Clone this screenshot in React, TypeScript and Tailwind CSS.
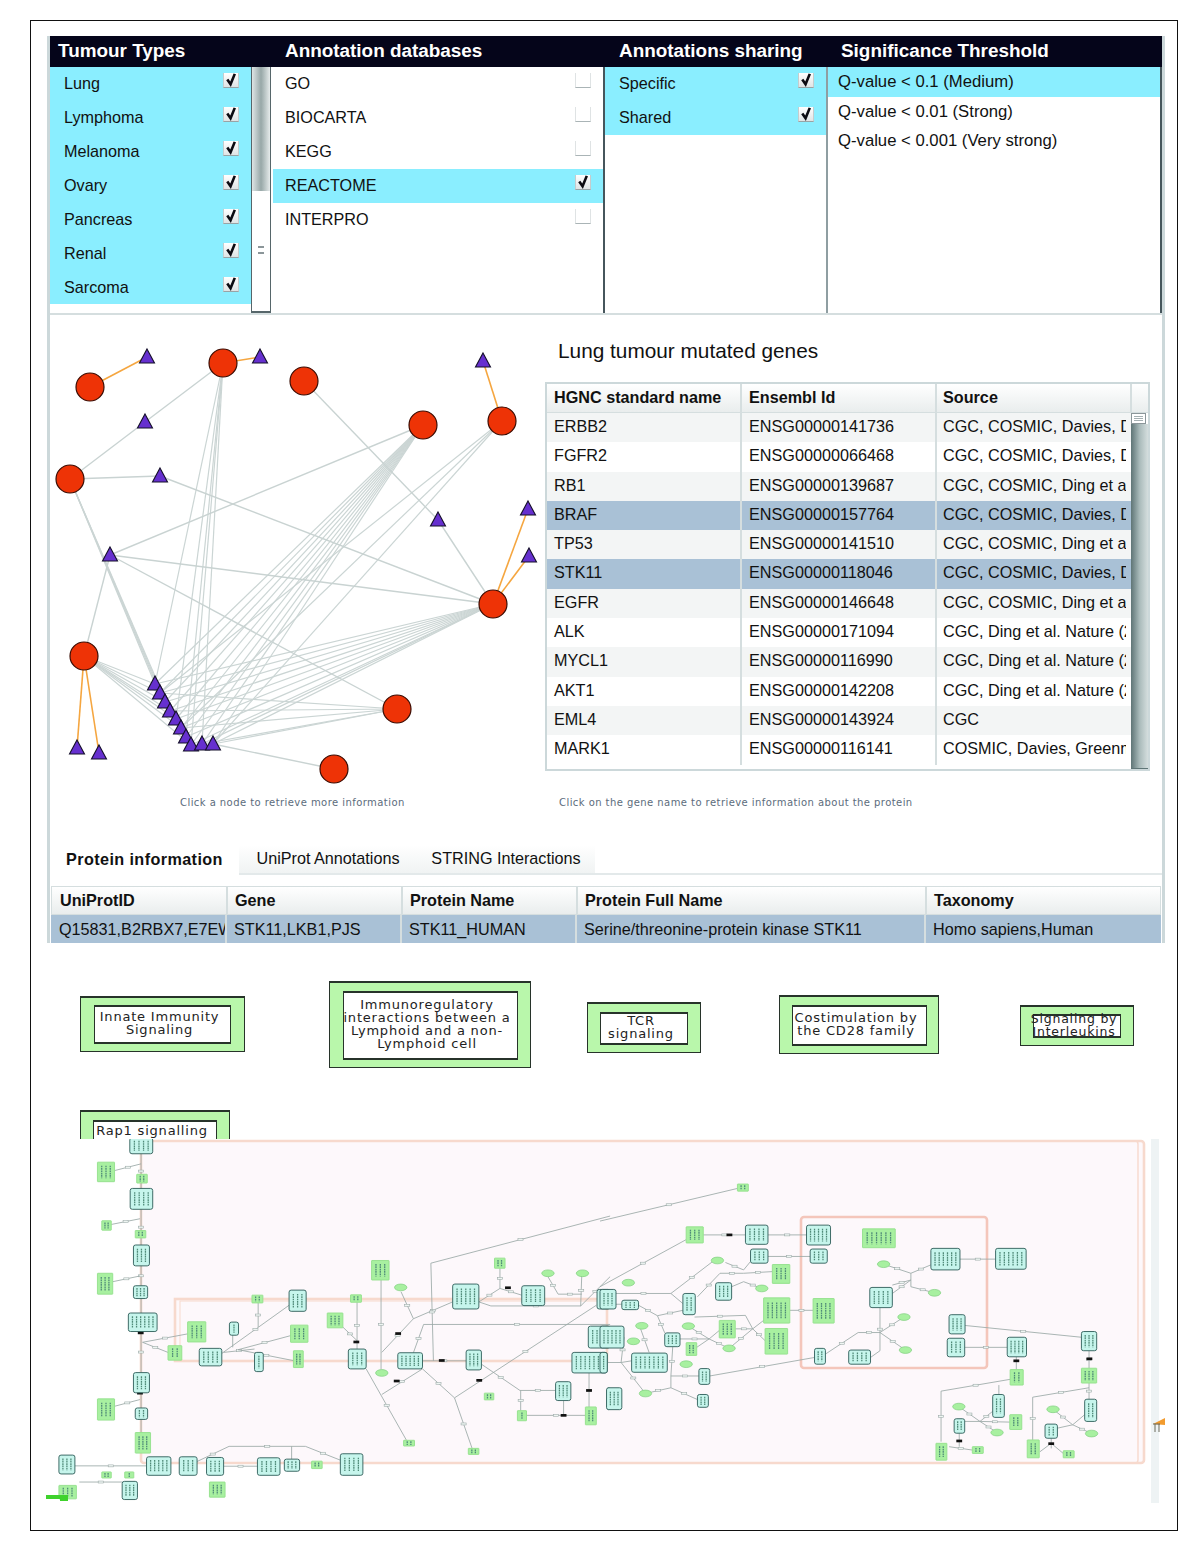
import { Fragment } from "react";

const tumours = ["Lung", "Lymphoma", "Melanoma", "Ovary", "Pancreas", "Renal", "Sarcoma"];
const databases = ["GO", "BIOCARTA", "KEGG", "REACTOME", "INTERPRO"];
const thresholds = ["Q-value < 0.1 (Medium)", "Q-value < 0.01 (Strong)", "Q-value < 0.001 (Very strong)"];

const genes = [
  ["ERBB2", "ENSG00000141736", "CGC, COSMIC, Davies, Ding et al. Nature"],
  ["FGFR2", "ENSG00000066468", "CGC, COSMIC, Davies, Ding et al. Nature"],
  ["RB1", "ENSG00000139687", "CGC, COSMIC, Ding et al. Nature (2008)"],
  ["BRAF", "ENSG00000157764", "CGC, COSMIC, Davies, Ding et al. Nature"],
  ["TP53", "ENSG00000141510", "CGC, COSMIC, Ding et al. Nature (2008)"],
  ["STK11", "ENSG00000118046", "CGC, COSMIC, Davies, Ding et al. Nature"],
  ["EGFR", "ENSG00000146648", "CGC, COSMIC, Ding et al. Nature (2008)"],
  ["ALK", "ENSG00000171094", "CGC, Ding et al. Nature (2008)"],
  ["MYCL1", "ENSG00000116990", "CGC, Ding et al. Nature (2008)"],
  ["AKT1", "ENSG00000142208", "CGC, Ding et al. Nature (2008)"],
  ["EML4", "ENSG00000143924", "CGC"],
  ["MARK1", "ENSG00000116141", "COSMIC, Davies, Greenman et al."],
];
const selectedGenes = ["BRAF", "STK11"];

// network graph, page coordinates
const reds = [
  [90, 387], [223, 363], [304, 381], [423, 425], [502, 421],
  [70, 479], [493, 604], [84, 656], [397, 709], [334, 769],
];
const triangles = [
  [147, 357], [260, 357], [483, 361], [145, 422], [160, 476], [438, 520],
  [528, 509], [529, 556], [110, 555], [77, 748], [99, 753],
];
const cluster = [
  [155, 684], [160, 693], [165, 702], [170, 711], [176, 719],
  [181, 728], [186, 737], [191, 745], [202, 744], [213, 744],
];
const orangeEdges = [
  [90, 387, 147, 357], [223, 363, 260, 357], [483, 361, 502, 421], [493, 604, 528, 509],
  [493, 604, 529, 556], [84, 656, 77, 748], [84, 656, 99, 753],
];
const greyEdges = [
  [223, 363, 145, 422], [145, 422, 70, 479], [70, 479, 160, 476], [160, 476, 493, 604],
  [304, 381, 438, 520], [438, 520, 493, 604], [423, 425, 110, 555], [110, 555, 493, 604],
  [110, 555, 397, 709], [110, 555, 84, 656], [213, 744, 334, 769],
];
// each hub links to some nodes of the cluster
const hubs: { at: number[]; to: number[] }[] = [
  { at: [423, 425], to: [0, 1, 2, 3, 4, 5, 6, 7, 8, 9] },
  { at: [493, 604], to: [0, 1, 2, 3, 4, 5, 6, 7, 8, 9] },
  { at: [84, 656], to: [0, 1, 2, 3, 4, 5, 7] },
  { at: [70, 479], to: [0, 1, 2, 3] },
  { at: [223, 363], to: [0, 4, 6, 7, 8] },
  { at: [502, 421], to: [1, 5, 9] },
  { at: [397, 709], to: [1, 3, 5, 8, 9] },
];

const Tri = ({ x, y }: { x: number; y: number }) => (
  <polygon points={`${x},${y - 8} ${x + 7.5},${y + 6} ${x - 7.5},${y + 6}`} fill="#6630cf" stroke="#15102a" strokeWidth="1.1" />
);

// pathway diagram, drawn in two halves
const teal: number[][] = [
  [247, 28, 310, 75], [248, 178, 310, 240], [257, 346, 301, 408], [257, 467, 296, 505], [243, 548, 322, 603],
  [257, 725, 301, 785], [262, 830, 296, 864], [52, 970, 96, 1026], [293, 975, 360, 1030], [383, 975, 432, 1030],
  [458, 977, 505, 1030], [598, 978, 660, 1030], [672, 982, 714, 1018], [826, 966, 888, 1030], [226, 1048, 268, 1102],
  [685, 480, 732, 543], [521, 575, 546, 614], [438, 653, 500, 705], [590, 665, 614, 722], [848, 655, 897, 714],
  [984, 666, 1052, 714], [1172, 658, 1214, 717], [1135, 462, 1207, 536], [1325, 467, 1388, 526], [1532, 478, 1568, 536],
  [1508, 587, 1568, 652], [1463, 665, 1560, 726], [1418, 752, 1460, 808], [1560, 770, 1568, 835],
];
const green: number[][] = [
  [158, 100, 205, 158], [266, 136, 295, 162], [170, 274, 196, 302], [262, 303, 291, 325], [158, 430, 200, 492],
  [158, 803, 205, 866], [262, 903, 304, 964], [406, 574, 456, 634], [352, 645, 390, 688], [583, 495, 613, 518],
  [689, 584, 737, 635], [697, 660, 724, 710], [790, 548, 833, 592], [854, 494, 884, 516], [912, 392, 960, 450],
  [1250, 385, 1279, 415], [1222, 786, 1248, 806], [1313, 838, 1338, 868], [1500, 827, 1530, 880], [1000, 926, 1030, 943],
  [1178, 950, 1207, 968], [747, 988, 776, 1010], [466, 1050, 509, 1095], [170, 1020, 196, 1038], [233, 1020, 258, 1038],
  [52, 1060, 100, 1100],
];
const ovals = [[992, 472], [1397, 430], [1492, 430], [940, 726]];
const edges: number[][] = [
  [278, 75, 278, 178], [278, 240, 278, 346], [278, 408, 278, 467], [278, 505, 278, 548], [278, 603, 278, 725],
  [278, 785, 278, 830], [278, 864, 278, 905], [205, 125, 278, 105], [196, 285, 275, 268], [200, 455, 275, 438],
  [205, 825, 275, 805], [282, 635, 406, 610], [282, 635, 352, 665], [96, 1002, 293, 1002], [108, 1050, 226, 1050],
  [430, 990, 520, 944], [520, 944, 730, 944], [730, 944, 826, 985], [505, 1003, 598, 1003], [692, 944, 692, 982],
  [500, 668, 685, 525], [530, 614, 530, 650], [600, 518, 600, 590], [505, 665, 590, 655], [545, 657, 690, 615],
  [545, 657, 700, 690], [872, 516, 872, 655], [833, 590, 872, 630], [938, 450, 938, 715], [993, 485, 1027, 565],
  [940, 665, 1027, 565], [1027, 565, 1135, 515], [1075, 400, 1568, 260], [1075, 400, 1082, 690], [1052, 690, 1172, 690],
  [1027, 666, 1055, 582], [1055, 582, 1568, 582], [897, 714, 1010, 930], [940, 790, 1052, 714], [1052, 714, 1140, 800],
  [1140, 800, 1190, 955], [1140, 800, 1530, 525], [1214, 700, 1320, 778], [1320, 778, 1418, 778], [1322, 778, 1322, 838],
  [1338, 852, 1500, 852], [1207, 515, 1265, 475], [1265, 415, 1265, 475], [1265, 475, 1325, 495], [1207, 515, 1240, 527],
  [1240, 527, 1487, 527], [1487, 527, 1568, 440], [1397, 440, 1425, 492], [1425, 492, 1490, 492], [1490, 435, 1487, 527],
  [1440, 808, 1440, 852], [1510, 726, 1510, 830],
];
const teal2: number[][] = [
  [400, 287, 462, 344], [568, 287, 634, 346], [414, 358, 462, 400], [578, 358, 625, 400], [318, 458, 362, 510],
  [0, 478, 44, 536], [60, 510, 106, 538], [228, 490, 262, 553], [0, 587, 66, 652], [178, 607, 220, 648],
  [0, 665, 20, 726], [87, 667, 185, 724], [18, 770, 60, 835], [272, 713, 302, 760], [268, 790, 298, 828],
  [910, 356, 990, 420], [1088, 356, 1172, 418], [742, 472, 804, 532], [590, 653, 620, 700], [684, 658, 744, 700],
  [960, 553, 1004, 610], [955, 623, 1003, 678], [1120, 620, 1173, 678], [1324, 603, 1366, 660], [1080, 790, 1112, 858],
  [974, 862, 1003, 905], [1333, 804, 1366, 870], [1224, 878, 1258, 920],
];
const green2: number[][] = [
  [378, 165, 408, 186], [237, 292, 284, 340], [474, 404, 522, 460], [450, 503, 522, 578], [586, 505, 644, 578],
  [454, 594, 516, 670], [328, 570, 372, 622], [237, 636, 266, 674], [722, 298, 812, 354], [1127, 850, 1160, 894],
  [1128, 716, 1164, 762], [1324, 712, 1366, 756], [924, 935, 954, 985], [1024, 945, 1054, 965], [1175, 925, 1208, 978],
  [1274, 957, 1304, 978],
];
const ovals2 = [
  [78, 458], [323, 392], [445, 475], [115, 586], [243, 587], [355, 653], [237, 700], [92, 632], [125, 787],
  [780, 403], [920, 488], [836, 560], [840, 658], [987, 826], [1092, 903], [1246, 834], [1352, 906],
];
const edges2: number[][] = [
  [0, 275, 378, 178], [284, 316, 400, 316], [462, 316, 568, 316], [462, 380, 578, 380], [0, 470, 237, 330],
  [44, 490, 195, 490], [195, 490, 228, 520], [195, 490, 310, 395], [60, 522, 30, 522], [106, 525, 158, 556],
  [158, 556, 228, 540], [158, 556, 178, 607], [268, 500, 330, 430], [330, 430, 395, 430], [362, 470, 395, 455],
  [395, 420, 414, 395], [395, 430, 474, 425], [395, 455, 445, 475], [345, 398, 395, 420], [200, 648, 195, 735],
  [195, 735, 272, 735], [195, 770, 195, 735], [195, 770, 268, 805], [125, 787, 195, 770], [302, 735, 590, 680],
  [220, 625, 300, 625], [266, 650, 300, 625], [243, 587, 300, 625], [300, 625, 355, 653], [300, 625, 328, 600],
  [372, 595, 420, 595], [420, 595, 450, 570], [420, 595, 454, 630], [355, 653, 420, 595], [260, 560, 400, 555],
  [400, 555, 420, 595], [522, 540, 586, 540], [66, 620, 58, 695], [20, 695, 58, 695], [58, 695, 87, 690],
  [58, 695, 125, 787], [110, 590, 135, 665], [620, 670, 710, 606], [710, 606, 770, 606], [770, 532, 770, 660],
  [770, 606, 840, 658], [770, 660, 744, 680], [770, 606, 836, 560], [804, 490, 855, 450], [804, 465, 855, 450],
  [855, 430, 910, 405], [855, 430, 780, 403], [855, 470, 855, 430], [855, 470, 920, 488], [990, 388, 1088, 388],
  [1004, 585, 1324, 620], [1003, 650, 1120, 650], [1145, 678, 1145, 716], [1345, 660, 1345, 712], [938, 930, 938, 780],
  [938, 780, 1128, 745], [1097, 762, 1097, 790], [1190, 925, 1190, 798], [1190, 798, 1345, 770], [1345, 756, 1345, 804],
  [1045, 870, 1080, 840], [1003, 870, 1045, 870], [1045, 870, 987, 826], [1045, 870, 1092, 903], [1045, 870, 1127, 872],
  [988, 905, 988, 945], [960, 945, 1024, 955], [1300, 880, 1333, 850], [1258, 890, 1300, 880], [1300, 880, 1246, 834],
  [1300, 880, 1352, 906], [1241, 920, 1241, 950], [1210, 960, 1241, 935], [1241, 935, 1274, 965],
];
const markers: number[][] = [
  [985, 609], [870, 634], [981, 750], [1105, 689], [1208, 748], [1287, 473], [1440, 852], [1510, 778],
  [277, 607], [275, 786],
];
const markers2: number[][] = [
  [356, 316], [1145, 690], [1346, 684], [988, 928], [1241, 936],
];

const NodeBox = ({ box, fill, stroke, rx }: { box: number[]; fill: string; stroke: string; rx: number }) => {
  const [x1, y1, x2, y2] = box;
  const w = x2 - x1;
  const h = y2 - y1;
  const cols = Math.max(1, Math.floor(w / 13));
  return (
    <g>
      <rect x={x1} y={y1} width={w} height={h} rx={rx} fill={fill} stroke={stroke} strokeWidth="2.6" />
      {Array.from({ length: cols }).map((_, i) => {
        const cx = x1 + ((i + 1) * w) / (cols + 1);
        return (
          <line key={i} x1={cx} y1={y1 + h * 0.18} x2={cx} y2={y2 - h * 0.18} stroke="#4f8a78" strokeWidth="3.5" strokeDasharray="5 2" />
        );
      })}
    </g>
  );
};

const Edges = ({ list }: { list: number[][] }) => (
  <>
    {list.map(([x1, y1, x2, y2], i) => (
      <Fragment key={i}>
        <line x1={x1} y1={y1} x2={x2} y2={y2} stroke="#9aa8a6" strokeWidth="2.4" />
        {Math.hypot(x2 - x1, y2 - y1) > 45 && (
          <rect x={(x1 + x2) / 2 - 7} y={(y1 + y2) / 2 - 3} width="14" height="6" fill="#eef5f2" stroke="#9aa8a6" strokeWidth="1.6" />
        )}
      </Fragment>
    ))}
  </>
);

const Half = ({ x, e, t, g, o, m }: { x: number; e: number[][]; t: number[][]; g: number[][]; o: number[][]; m: number[][] }) => (
  <g transform={`translate(${x} 1128.5) scale(0.3636 0.3367)`}>
    <Edges list={e} />
    {m.map(([mx, my], i) => (
      <rect key={i} x={mx - 8} y={my - 4} width="16" height="8" fill="#111" />
    ))}
    {g.map((b, i) => (
      <NodeBox key={i} box={b} fill="#a8f0a0" stroke="#93e08c" rx={1} />
    ))}
    {t.map((b, i) => (
      <NodeBox key={i} box={b} fill="#c6f5ec" stroke="#2f5f5a" rx={6} />
    ))}
    {o.map(([cx, cy], i) => (
      <ellipse key={i} cx={cx} cy={cy} rx="17" ry="10" fill="#a8f0a0" stroke="#7fcf80" strokeWidth="2" />
    ))}
  </g>
);

const Check = ({ on }: { on: boolean }) => (
  <div
    className={`relative mt-[-6px] h-[15px] w-[16px] border-x border-b ${
      on ? "border-[#c5cccd] border-b-[#98a4a6] bg-gradient-to-b from-white to-[#dfe4e5]" : "border-[#dfe3e4] border-b-[#aab4b6] bg-white"
    }`}
  >
    {on && (
      <svg viewBox="0 0 16 15" className="absolute left-0 top-[-1px] h-[15px] w-[15px]">
        <path d="M3.5 7.5 L7 12.5 L11.5 1.5" fill="none" stroke="#0b0b12" strokeWidth="2.8" />
      </svg>
    )}
  </div>
);

const CheckRow = ({ label, on, pad }: { label: string; on: boolean; pad: string }) => (
  <div className={`flex h-[33.9px] items-center justify-between ${pad} pr-[12px] ${on ? "bg-[#8aeeff]" : ""}`}>
    <span className="mt-[-1px]">{label}</span>
    <Check on={on} />
  </div>
);

const PathwayBox = ({ lines, outer, inner, size }: { lines: string[]; outer: string; inner: string; size?: string }) => (
  <div className={`flex shrink-0 items-center justify-center border border-[#27332a] border-t-2 bg-[#b9f7ab] ${outer}`}>
    <div className={`flex flex-col items-center justify-center border border-[#27332a] border-y-2 bg-white pb-[3px] pr-[6px] leading-[13px] tracking-[0.8px] text-[#222] ${inner} ${size ?? "text-[13px]"}`}>
      {lines.map((l) => (
        <span key={l} className="whitespace-nowrap">{l}</span>
      ))}
    </div>
  </div>
);

export default function App() {
  return (
    <div className="h-[1557px] w-[1200px] bg-white pl-[30px] pt-[20px] font-['Liberation_Sans',Arial,sans-serif] text-[#111]">
      <div className="h-[1511px] w-[1148px] overflow-hidden border border-[#111] pt-[15px]">
        <div className="ml-[16px] w-[1118px] border-x-[3px] border-[#ccd8da]">
          {/* Filter panel */}
          <div className="grid h-[31px] grid-cols-[227px_334px_222px_1fr] items-center bg-[#05051a] pl-[8px] text-[18.9px] font-bold text-white">
            <span>Tumour Types</span>
            <span>Annotation databases</span>
            <span>Annotations sharing</span>
            <span>Significance Threshold</span>
          </div>
          <div className="flex h-[248px] border-b-2 border-[#d5dedf] text-[16.2px]">
            <div className="flex w-[222px]">
              <div className="w-[201px]">
                {tumours.map((t) => (
                  <CheckRow key={t} label={t} on pad="pl-[14px]" />
                ))}
              </div>
              <div className="flex w-[20px] flex-col border-x border-b-2 border-[#56666a]">
                <div className="h-[124px] bg-gradient-to-r from-[#dfe5e5] via-[#98a8a8] to-[#e6ebeb]" />
                <div className="flex flex-1 items-center justify-center bg-white">
                  <div className="mt-[-2px] h-[8px] w-[6px] border-y-2 border-double border-[#8b9699]" />
                </div>
              </div>
            </div>
            <div className="w-[333px] border-r-2 border-[#46565c] pl-[1px]">
              {databases.map((d) => (
                <CheckRow key={d} label={d} on={d === "REACTOME"} pad="pl-[12px]" />
              ))}
            </div>
            <div className="w-[223px] border-r-2 border-[#8f9ea2]">
              <CheckRow label="Specific" on pad="pl-[14px]" />
              <CheckRow label="Shared" on pad="pl-[14px]" />
            </div>
            <div className="flex-1 border-r-2 border-[#46565c] text-[16.7px]">
              {thresholds.map((t, i) => (
                <div key={t} className={`flex h-[29.5px] items-center pl-[10px] ${i === 0 ? "bg-[#8aeeff]" : ""}`}>
                  {t}
                </div>
              ))}
            </div>
          </div>

          {/* Network and gene table */}
          <div className="flex h-[529px]">
            <div className="w-[490px]">
              <svg viewBox="50 330 490 460" className="mt-[15px] block h-[460px] w-[490px] blur-[0.3px]">
                {hubs.map(({ at, to }, h) =>
                  to.map((i) => (
                    <line key={`${h}-${i}`} x1={at[0]} y1={at[1]} x2={cluster[i][0]} y2={cluster[i][1]} stroke="#cbd5d4" strokeWidth="1.2" />
                  ))
                )}
                {greyEdges.map(([a, b, c, d], i) => (
                  <line key={i} x1={a} y1={b} x2={c} y2={d} stroke="#c9d3d2" strokeWidth="1.4" />
                ))}
                {orangeEdges.map(([a, b, c, d], i) => (
                  <line key={i} x1={a} y1={b} x2={c} y2={d} stroke="#f5a640" strokeWidth="1.6" />
                ))}
                {triangles.concat(cluster).map(([x, y], i) => (
                  <Tri key={i} x={x} y={y} />
                ))}
                {reds.map(([x, y], i) => (
                  <circle key={i} cx={x} cy={y} r="14" fill="#ee3306" stroke="#3a0d04" strokeWidth="1.2" />
                ))}
              </svg>
              <p className="mt-[6px] pl-[130px] font-['DejaVu_Sans',sans-serif] text-[10px] leading-[13px] tracking-[0.44px] text-[#5c6c7c]">
                Click a node to retrieve more information
              </p>
            </div>
            <div className="w-[620px] pl-[5px]">
              <h2 className="pl-[13px] pt-[24px] text-[20.8px] leading-[24px]">Lung tumour mutated genes</h2>
              <div className="mt-[19px] h-[389px] w-[605px] border-2 border-[#ccd8da] text-[16.2px]">
                <div className="flex h-[29px] border-b border-[#d5dedf] bg-gradient-to-b from-white to-[#e9eded] font-bold">
                  <div className="w-[195px] border-r-2 border-[#d5dedf] pl-[7px] leading-[27px]">HGNC standard name</div>
                  <div className="w-[195px] border-r-2 border-[#d5dedf] pl-[7px] leading-[27px]">Ensembl Id</div>
                  <div className="w-[195px] border-r-2 border-[#d5dedf] pl-[6px] leading-[27px]">Source</div>
                </div>
                <div className="flex">
                  <div className="w-[584px]">
                    {genes.map((g, i) => (
                      <div
                        key={g[0]}
                        className={`flex h-[29.3px] items-center ${selectedGenes.includes(g[0]) ? "bg-[#a9c1d6]" : i % 2 === 0 ? "bg-[#f3f5f5]" : "bg-white"}`}
                      >
                        <div className="h-full w-[195px] border-r-2 border-[#d5dedf] pl-[7px] leading-[27.5px]">{g[0]}</div>
                        <div className="h-full w-[195px] border-r-2 border-[#d5dedf] pl-[7px] leading-[27.5px]">{g[1]}</div>
                        <div className="h-full w-[189px] overflow-hidden whitespace-nowrap pl-[6px] leading-[27.5px]">{g[2]}</div>
                      </div>
                    ))}
                  </div>
                  <div className="flex h-[356px] w-[17px] flex-col border-b border-[#5f7576]">
                    <div className="flex h-[11px] w-[15px] flex-col justify-center gap-[1px] border border-[#8b9699] bg-white px-[2px]">
                      <div className="h-px bg-[#a5b0b2]" />
                      <div className="h-px bg-[#a5b0b2]" />
                      <div className="h-px bg-[#a5b0b2]" />
                    </div>
                    <div className="flex-1 bg-gradient-to-r from-[#5f7576] via-[#a9baba] to-[#d5dede]" />
                  </div>
                </div>
              </div>
              <p className="mt-[25px] pl-[14px] font-['DejaVu_Sans',sans-serif] text-[10px] leading-[13px] tracking-[0.44px] text-[#5c6c7c]">
                Click on the gene name to retrieve information about the protein
              </p>
            </div>
          </div>

          {/* Protein tabs */}
          <div className="mt-[1px] flex h-[30px] items-center text-[16.2px]">
            <div className="mt-[-2px] w-[189px] pl-[16px] font-bold tracking-[0.4px]">Protein information</div>
            <div className="flex h-full w-[178px] items-center justify-center border-b-2 border-[#e3e9ea] bg-gradient-to-b from-white to-[#f0f3f3] pb-[2px]">UniProt Annotations</div>
            <div className="flex h-full w-[178px] items-center justify-center border-b-2 border-[#e3e9ea] bg-gradient-to-b from-white to-[#f0f3f3] pb-[2px]">STRING Interactions</div>
            <div className="h-full flex-1 border-b-2 border-[#e3e9ea]" />
          </div>
          <div className="mx-[1px] mt-[11px] text-[16.2px]">
            <div className="flex h-[29px] items-center border border-[#d5dedf] bg-gradient-to-b from-white to-[#e9eded] font-bold">
              <div className="h-full w-[176px] border-r-2 border-[#d5dedf] pl-[8px] leading-[27px]">UniProtID</div>
              <div className="h-full w-[175px] border-r-2 border-[#d5dedf] pl-[7px] leading-[27px]">Gene</div>
              <div className="h-full w-[175px] border-r-2 border-[#d5dedf] pl-[7px] leading-[27px]">Protein Name</div>
              <div className="h-full w-[349px] border-r-2 border-[#d5dedf] pl-[7px] leading-[27px]">Protein Full Name</div>
              <div className="h-full flex-1 pl-[7px] leading-[27px]">Taxonomy</div>
            </div>
            <div className="flex h-[28px] items-center bg-[#a9c1d6]">
              <div className="h-full w-[176px] overflow-hidden whitespace-nowrap border-r-2 border-[#d5dedf] pl-[8px] leading-[28px]">Q15831,B2RBX7,E7EW</div>
              <div className="h-full w-[175px] border-r-2 border-[#d5dedf] pl-[7px] leading-[28px]">STK11,LKB1,PJS</div>
              <div className="h-full w-[175px] border-r-2 border-[#d5dedf] pl-[7px] leading-[28px]">STK11_HUMAN</div>
              <div className="h-full w-[349px] border-r-2 border-[#d5dedf] pl-[7px] leading-[28px]">Serine/threonine-protein kinase STK11</div>
              <div className="h-full flex-1 pl-[7px] leading-[28px]">Homo sapiens,Human</div>
            </div>
          </div>
        </div>

        {/* Pathway names */}
        <div className="mt-[38px] flex items-start font-['DejaVu_Sans',sans-serif]">
          <PathwayBox lines={["Innate Immunity", "Signaling"]} outer="ml-[49px] mt-[15px] h-[56px] w-[165px]" inner="h-[39px] w-[137px]" />
          <PathwayBox lines={["Immunoregulatory", "interactions between a", "Lymphoid and a non-", "Lymphoid cell"]} outer="ml-[84px] h-[87px] w-[202px]" inner="h-[69px] w-[175px]" />
          <PathwayBox lines={["TCR", "signaling"]} outer="ml-[56px] mt-[21px] h-[51px] w-[114px]" inner="h-[33px] w-[88px]" />
          <PathwayBox lines={["Costimulation by", "the CD28 family"]} outer="ml-[78px] mt-[14px] h-[59px] w-[160px]" inner="h-[41px] w-[135px]" />
          <PathwayBox lines={["Signaling by", "Interleukins"]} outer="ml-[81px] mt-[24px] h-[41px] w-[114px]" inner="h-[24px] w-[88px]" size="text-[12.5px]" />
        </div>
        <div className="ml-[49px] mt-[42px] h-[29px] w-[150px] overflow-hidden font-['DejaVu_Sans',sans-serif]">
          <PathwayBox lines={["Rap1 signalling"]} outer="h-[48px] w-[150px] !items-start pt-[8px]" inner="h-[24px] w-[124px]" />
        </div>

        {/* Pathway diagram */}
        <svg viewBox="46 1139 1124 366" className="ml-[15px] block h-[366px] w-[1124px] blur-[0.4px]">
          <rect x="141" y="1141" width="1003" height="322" rx="3" fill="#fdf8fb" stroke="#f7d9cd" strokeWidth="2.6" />
          <rect x="141" y="1141" width="997" height="322" rx="3" fill="none" stroke="#f7d9cd" strokeWidth="1.4" />
          <rect x="175" y="1299" width="432" height="62" fill="none" stroke="#f7d9cd" strokeWidth="2.6" />
          <rect x="180" y="1301" width="427" height="60" fill="none" stroke="#f7d9cd" strokeWidth="1" />
          <rect x="801" y="1217" width="186" height="151" rx="3" fill="none" stroke="#f4c6bb" strokeWidth="2.6" />
          <rect x="1151" y="1139" width="8" height="364" fill="#eef3f4" />
          <Half x={40} e={edges} t={teal} g={green} o={ovals} m={markers} />
          <Half x={600} e={edges2} t={teal2} g={green2} o={ovals2} m={markers2} />
          <rect x="46" y="1495" width="22" height="4" fill="#3fd22c" />
          <rect x="60" y="1495" width="8" height="6" fill="#3fd22c" />
          <polygon points="1153,1424 1165,1418 1165,1425" fill="#f29b2e" />
          <path d="M1153 1424 H1160 M1155 1424 V1432 M1159 1424 V1432" stroke="#6a6a5a" strokeWidth="1" />
        </svg>
      </div>
    </div>
  );
}
